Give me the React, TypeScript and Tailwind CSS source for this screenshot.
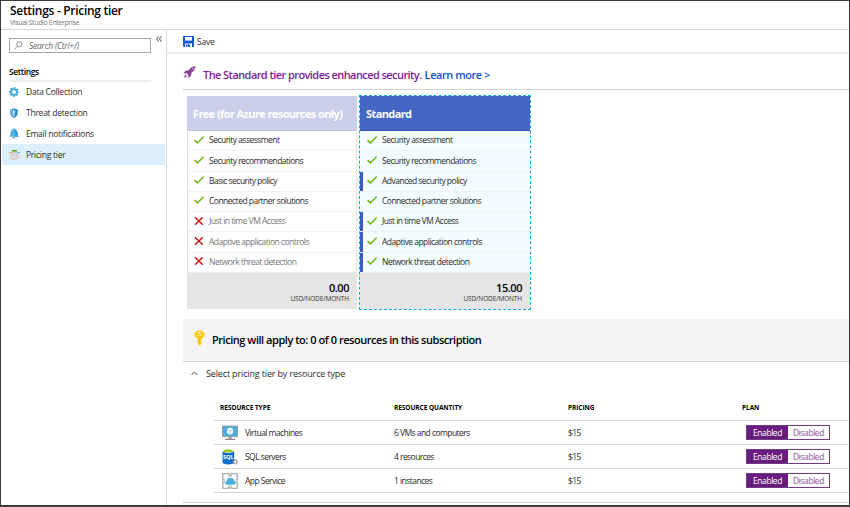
import React from "react";

const Gear = () => (
  <svg viewBox="0 0 10 10" className="size-[10px]">
    <circle cx="5" cy="5" r="2.9" fill="none" stroke="#3fa3d6" strokeWidth="1.8" />
    <circle cx="5" cy="5" r="4.3" fill="none" stroke="#3fa3d6" strokeWidth="1.4" strokeDasharray="1.7 1.677" strokeDashoffset="0.85" />
  </svg>
);
const Shield = () => (
  <svg viewBox="0 0 10 10" className="size-[10px]">
    <path d="M5 0 C6 .9 7.5 1.2 8.8 1.2 V5 C8.8 7.5 7 9 5 10 C3 9 1.2 7.5 1.2 5 V1.2 C2.5 1.2 4 .9 5 0Z" fill="#3c94c4" />
    <path d="M5 .8 V9.2 C3.2 8.2 2 7 2 5 V2 C3.2 2 4 1.6 5 .8Z" fill="#68b9df" />
    <path d="M5 2.4V5.8M5 6.8V7.8" stroke="#fff" strokeWidth="1.2" />
  </svg>
);
const Bell = () => (
  <svg viewBox="0 0 10 11" className="h-[11px] w-[10px]">
    <path d="M5 .3C5.7.3 6 .8 6 1.3C7.8 1.8 8.6 3.3 8.6 5C8.6 6.8 8.7 7.6 9.7 8.8H.3C1.3 7.6 1.4 6.8 1.4 5C1.4 3.3 2.2 1.8 4 1.3C4 .8 4.3.3 5 .3Z" fill="#55b3df" />
    <path d="M3.8 9.3H6.2C6.1 10.2 5.6 10.6 5 10.6S3.9 10.2 3.8 9.3Z" fill="#3284b0" />
    <path d="M6 1.3C7.8 1.8 8.6 3.3 8.6 5C8.6 6.8 8.7 7.6 9.7 8.8H6Z" fill="#3c9fd0" />
  </svg>
);
const Tier = () => (
  <svg viewBox="0 0 11 10" className="h-[10px] w-[11px]">
    <path d="M.5 3h2.3v6H.5zM8.2 3h2.3v6H8.2z" fill="#dcdcdc" />
    <path d="M3 1.5h5V10H3z" fill="#cfcfcf" />
    <path d="M3 0h5v1.5H3z" fill="#57a300" />
    <path d="M.3 2h2.3v1H.3z" fill="#f29b35" />
    <path d="M8.4 2h2.3v1H8.4z" fill="#45a7d8" />
    <path d="M4 4h3M4 6h3M4 8h3" stroke="#eee" strokeWidth=".7" />
  </svg>
);
const Save = () => (
  <svg viewBox="0 0 11 11" className="size-[11px]">
    <path d="M0 0H11V11H9V7.4H2V11H1L0 10Z" fill="#1557d2" />
    <path d="M2 1H9V4.6H2Z" fill="#fff" />
    <path d="M3 8.6H7V11H5V9.8H4V11H3Z" fill="#1557d2" />
  </svg>
);
const Rocket = () => (
  <svg viewBox="0 0 13 13" className="size-[13px]">
    <path d="M12.5 0C9.6.4 7.5 1.7 5.6 4.3L2.4 4.8L.3 7.6L3.4 7.2L5.6 9.4L5.2 12.2L7.9 10.2L8.4 7C11 5 12.2 2.7 12.5 0Z" fill="#8b4596" />
    <path d="M2.3 8.5L.8 11.8L4.3 10.3Z" fill="#8b4596" />
    <circle cx="10" cy="2.6" r=".7" fill="#fff" />
  </svg>
);
const Check = () => (
  <svg viewBox="0 0 10 8" className="h-[8px] w-[10px]">
    <path d="M.5 4.1L3.5 6.9L9.7.6" fill="none" stroke="#73b510" strokeWidth="1.45" />
  </svg>
);
const Cross = () => (
  <svg viewBox="0 0 10 8" className="h-[8px] w-[10px]">
    <path d="M1 .3L8.8 7.7M8.8 .3L1 7.7" fill="none" stroke="#cb1016" strokeWidth="1.5" />
  </svg>
);
const Key = () => (
  <svg viewBox="0 0 11 16" className="h-[16px] w-[11px]">
    <path d="M3.4 .5H7.6L10.5 3V6.3L7.4 9.2V14L5.6 15.8L3.8 14V9.2L.5 6.3V3Z" fill="#fccb14" />
    <ellipse cx="5.5" cy="2.6" rx="1.5" ry=".9" fill="#fff" />
    <path d="M2.8 5.2H8.2" stroke="#fff0a5" strokeWidth=".8" />
    <path d="M5 8.8V14.3" stroke="#e8a800" strokeWidth=".8" />
  </svg>
);
const Vm = () => (
  <svg viewBox="0 0 16 16" className="size-4">
    <path d="M.5 1H15.5V11.6H.5Z" fill="#4eaeda" stroke="#999" strokeWidth=".9" />
    <path d="M8 2.4L11 4V8L8 9.8L5 8V4Z" fill="#fff" />
    <path d="M5 4L8 5.7L11 4M8 5.7V9.8" stroke="#7cc5e6" strokeWidth=".7" fill="none" />
    <path d="M6.3 12H9.7V13.8H6.3Z" fill="#999" />
    <path d="M3 13.8H13V15H3Z" fill="#858585" />
  </svg>
);
const Sql = () => (
  <svg viewBox="0 0 16 16" className="size-4">
    <path d="M.5 2V13.3C.5 14.6 3 15.5 6.3 15.5S12.2 14.6 12.2 13.3V2Z" fill="#0870c6" />
    <ellipse cx="6.3" cy="2" rx="5.9" ry="1.9" fill="#f3f8e6" />
    <ellipse cx="6.3" cy="1.9" rx="4.8" ry="1.3" fill="#a2c614" />
    <text x="6.4" y="10.4" fontSize="5.7" textAnchor="middle" fontWeight="700" fill="#fff" fontFamily="Open Sans, sans-serif" letterSpacing="0">SQL</text>
    <circle cx="13.2" cy="12.8" r="1.7" fill="#fff" stroke="#8b8b8b" strokeWidth="1" />
    <circle cx="13.2" cy="12.8" r="2.5" fill="none" stroke="#8b8b8b" strokeWidth=".8" strokeDasharray=".95 1.01" />
  </svg>
);
const AppSvc = () => (
  <svg viewBox="0 0 16 16" className="size-4">
    <path d="M7 4V.7H.8V7H3M9 4V.7H15.2V7H13.5M3 9H.8V15.3H7V12.5M13.5 9H15.2V15.3H9V12.5" fill="none" stroke="#999" strokeWidth="1.1" />
    <path d="M4.8 11.7C2.5 11.7 2.4 8.5 4.7 8.2C4.4 5.8 6.8 4.2 8.6 5.2C10.4 4.5 12 5.7 11.8 7.6C14 7.5 14.3 11.7 12 11.7Z" fill="#4db0dc" />
  </svg>
);

const nav = [
  { label: "Data Collection", icon: <Gear />, on: false },
  { label: "Threat detection", icon: <Shield />, on: false },
  { label: "Email notifications", icon: <Bell />, on: false },
  { label: "Pricing tier", icon: <Tier />, on: true },
];
const free: [string, boolean][] = [
  ["Security assessment", true],
  ["Security recommendations", true],
  ["Basic security policy", true],
  ["Connected partner solutions", true],
  ["Just in time VM Access", false],
  ["Adaptive application controls", false],
  ["Network threat detection", false],
];
const standard: [string, boolean][] = [
  ["Security assessment", false],
  ["Security recommendations", false],
  ["Advanced security policy", true],
  ["Connected partner solutions", false],
  ["Just in time VM Access", true],
  ["Adaptive application controls", true],
  ["Network threat detection", true],
];
const resources = [
  { name: "Virtual machines", qty: "6 VMs and computers", icon: <Vm /> },
  { name: "SQL servers", qty: "4 resources", icon: <Sql /> },
  { name: "App Service", qty: "1 instances", icon: <AppSvc /> },
];

function Price({ value }: { value: string }) {
  return (
    <div className="flex h-[36px] flex-col items-end bg-[#e5e5e5] pr-[8px] pt-[7px] text-black">
      <div className="text-[11px] font-semibold leading-[15px] tracking-[-0.45px]">{value}</div>
      <div className="text-[6.5px] leading-[8px] tracking-[-0.12px] text-[#333]">USD/NODE/MONTH</div>
    </div>
  );
}

export default function App() {
  return (
    <div className="flex h-[507px] w-[850px] flex-col overflow-hidden whitespace-nowrap border border-b-2 border-[#3a3a3a] bg-white font-['Open_Sans','Noto_Sans',sans-serif] text-[8.5px] tracking-[-0.25px] text-[#2b2b2b]">
      <header className="h-[29px] shrink-0 border-b border-[#d6d6d6] pl-[9px] pt-px">
        <h1 className="text-[12px] font-semibold leading-[17px] tracking-[-0.3px] text-black">Settings - Pricing tier</h1>
        <p className="text-[7px] leading-[8px] tracking-[-0.35px] text-[#777]">Visual Studio Enterprise</p>
      </header>
      <div className="flex min-h-0 flex-1">
        <aside className="w-[166px] shrink-0 border-r border-[#dcdcdc]">
          <div className="flex pl-[8px] pt-[8px]">
            <div className="flex h-[15px] w-[142px] items-center border border-[#a6a6a6] pl-[4px]">
              <svg viewBox="0 0 9 9" className="size-[9px]">
                <circle cx="5.3" cy="3.3" r="2.6" fill="none" stroke="#777" strokeWidth=".8" />
                <path d="M3.4 5.2L.5 8.3" stroke="#777" strokeWidth=".8" />
              </svg>
              <span className="ml-[6px] pt-px italic tracking-[-0.25px] text-[#666]">Search (Ctrl+/)</span>
            </div>
            <svg viewBox="0 0 6 6" className="ml-[5px] -mt-[2px] size-[6px]">
              <path d="M2.8.3L.6 3L2.8 5.7M5.6.3L3.4 3L5.6 5.7" fill="none" stroke="#333" strokeWidth=".9" />
            </svg>
          </div>
          <div className="ml-[8px] mt-[12px] h-[17px] w-[142px] border-b-2 border-[#eeeeee] text-[8.5px] font-semibold leading-[13px] tracking-[-0.4px] text-black">Settings</div>
          <nav>
            {nav.map((n) => (
              <div key={n.label} className={n.on ? "mx-px flex h-[21px] items-center bg-[#dcefff] pl-[7px]" : "mx-px flex h-[20.7px] items-center pl-[7px]"}>
                <span className="flex w-[17px]">{n.icon}</span>
                <span className="pt-px">{n.label}</span>
              </div>
            ))}
          </nav>
        </aside>
        <main className="min-w-0 flex-1">
          <div className="flex h-[24px] items-center border-b-2 border-[#ececec] pl-[16px]">
            <Save />
            <span className="ml-[3px] pt-[2px]">Save</span>
          </div>
          <div className="ml-[16px] flex h-[36px] items-center border-b border-[#d3d3d3] pt-[7px]">
            <span className="-mt-[5px]"><Rocket /></span>
            <span className="ml-[7px] text-[11px] font-semibold tracking-[-0.57px] text-[#7b1e96]">The Standard tier provides enhanced security.</span>
            <span className="ml-[3px] text-[11px] font-semibold tracking-[-0.46px] text-[#0f54cf]">Learn more &gt;</span>
          </div>
          <div className="flex gap-[2px] pl-[20px] pt-[5px]">
            <section className="mt-px h-[213px] w-[170px]">
              <h2 className="h-[35px] border-b border-[#bfc5e6] bg-[#cbcfe9] pl-[6px] text-[11px] font-bold leading-[35px] tracking-[-0.6px] text-white">Free (for Azure resources only)</h2>
              <div className="border-x border-[#e3e3e3]">
                {free.map(([t, ok]) => (
                  <div key={t} className="flex h-[20.28px] items-center border-b border-[#f0f0f0] pl-[6px]">
                    <span className="-mt-[2px]">{ok ? <Check /> : <Cross />}</span>
                    <span className={ok ? "ml-[5px] tracking-[-0.52px]" : "ml-[5px] tracking-[-0.52px] text-[#777]"}>{t}</span>
                  </div>
                ))}
              </div>
              <Price value="0.00" />
            </section>
            <section className="h-[215px] w-[172px] border border-dashed border-[#12a8e5]">
              <h2 className="h-[35px] border-b border-[#3453b8] bg-[#4467c3] pl-[6px] text-[11px] font-bold leading-[35px] tracking-[-0.6px] text-white">Standard</h2>
              <div className="bg-[#f3fdff]">
                {standard.map(([t, extra]) => (
                  <div key={t} className="flex h-[20.28px] items-center border-b border-[#edf3f5]">
                    <span className={extra ? "h-full w-[3px] bg-[#3c5bc5]" : "h-full w-[3px]"} />
                    <span className="-mt-[2px] ml-[4px] flex"><Check /></span>
                    <span className="ml-[5px] tracking-[-0.52px]">{t}</span>
                  </div>
                ))}
              </div>
              <Price value="15.00" />
            </section>
          </div>
          <div className="ml-[16px] mt-[9px] flex h-[43px] items-center border-b border-[#d3d3d3] bg-[#f4f4f4] pl-[11px]">
            <span className="-mt-[4px]"><Key /></span>
            <span className="ml-[7px] text-[11px] font-semibold tracking-[-0.46px] text-black">Pricing will apply to: 0 of 0 resources in this subscription</span>
          </div>
          <div className="flex h-[23px] items-center pl-[24px]">
            <svg viewBox="0 0 7 5" className="h-[5px] w-[7px]">
              <path d="M.5 4L3.5 1L6.5 4" fill="none" stroke="#444" strokeWidth="1" />
            </svg>
            <span className="ml-[8px] text-[9px] tracking-[-0.15px]">Select pricing tier by resource type</span>
          </div>
          <div className="ml-[47px] mt-[8px]">
            <div className="grid h-[28px] grid-cols-[174px_174px_174px_1fr] items-center border-b border-[#d3d3d3] pl-[6px] pt-[2px] text-[6.5px] font-bold text-black">
              <span className="tracking-[-0.05px]">RESOURCE TYPE</span>
              <span className="tracking-[-0.05px]">RESOURCE QUANTITY</span>
              <span className="tracking-[-0.05px]">PRICING</span>
              <span className="tracking-[-0.05px]">PLAN</span>
            </div>
            {resources.map((r) => (
              <div key={r.name} className="grid h-[24px] grid-cols-[174px_174px_174px_1fr] items-center border-b border-[#d3d3d3] pl-[6px] tracking-[-0.55px]">
                <span className="flex items-center gap-[7px] pl-[2px]">{r.icon}<span className="pt-px">{r.name}</span></span>
                <span className="pt-px">{r.qty}</span>
                <span className="pt-px">$15</span>
                <span className="ml-[4px] flex h-[15px] w-[84px] border border-[#713a87] text-center leading-[14px] tracking-[-0.45px]">
                  <span className="w-[41px] bg-[#681d7c] text-white">Enabled</span>
                  <span className="flex-1 text-[#8750a0]">Disabled</span>
                </span>
              </div>
            ))}
          </div>
          <div className="ml-[16px] mt-[9px] border-b border-[#d3d3d3]" />
        </main>
      </div>
    </div>
  );
}
